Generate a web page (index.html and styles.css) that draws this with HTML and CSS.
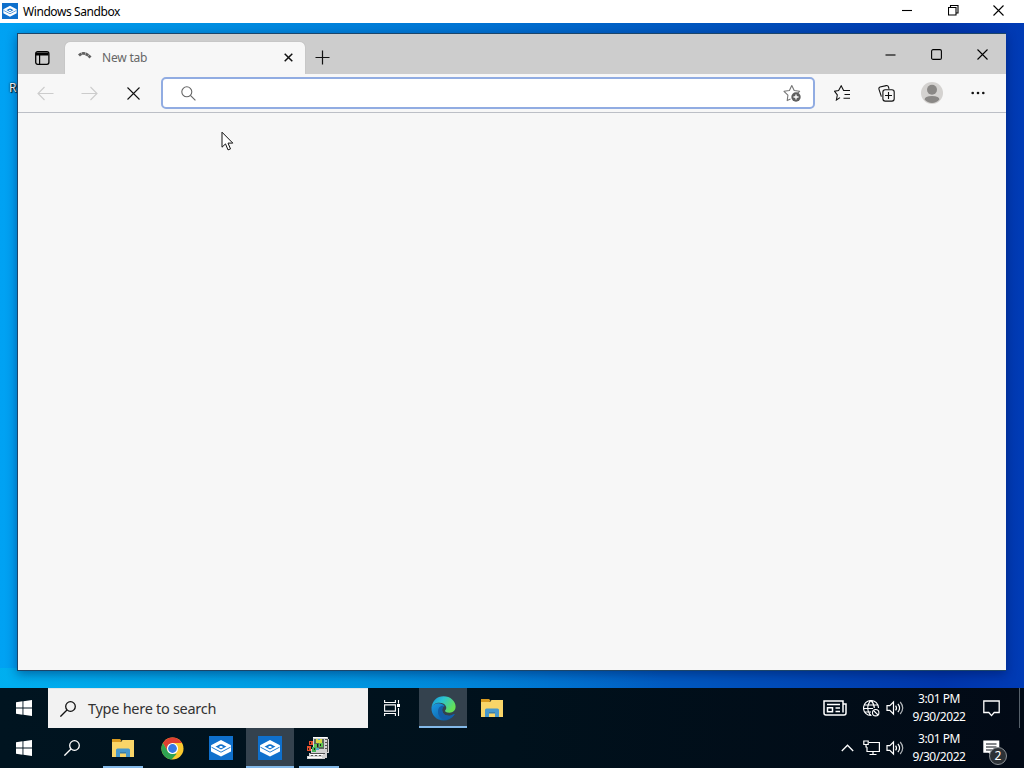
FILE: index.html
```html
<!DOCTYPE html>
<html lang="en">

<head>
    <meta charset="utf-8">
    <title>Windows Sandbox</title>
    <link rel="stylesheet" href="styles.css">
</head>

<body>
    <!-- shared icons -->
    <svg class="sprite" aria-hidden="true">
        <symbol id="sandbox" viewBox="0 0 24 24">
            <path fill="#0f70cc" d="M0 0h24v24H0z"/>
            <path fill="#fff" d="M12 4 22 9.300 12 14.600 2 9.300zM2 10.800l10 5.300 10-5.300v4.600l-10 5.200-10-5.200z"/>
            <path fill="#fff" d="M2 9.300h20v2L12 16.200 2 11.300z"/>
            <path fill="none" stroke="#0f70cc" stroke-width=".9" d="m2.500 11.200 9.500 5 9.500-5"/>
            <path fill="#0f70cc" d="M6.500 10.600c2-.6 3.500-2.400 5.500-2.400s3.500 1.800 5.500 2.400L12 13.600z"/>
            <path fill="#fff" d="M9.500 11c1-.3 1.500-1 2.500-1s1.500.7 2.500 1L12 12.300z"/>
        </symbol>
        <symbol id="start" viewBox="0 0 16 16">
            <path fill="#fff" d="M0 2.200 6.500 1.300v6.200H0zM7.400 1.200 16 0v7.500H7.400zM0 8.400h6.500v6.300L0 13.800zM7.400 8.400H16V16l-8.600-1.200z"/>
        </symbol>
        <symbol id="find" viewBox="0 0 16 16">
            <g fill="none" stroke="currentColor" stroke-width="1.300"><circle cx="10.500" cy="5.500" r="4.800"/><path d="M7 9 .4 15.600"/></g>
        </symbol>
        <symbol id="folder" viewBox="0 0 22 20">
            <path fill="#f9d568" d="M0 4h9l1.500-2H22v17H0z"/>
            <path fill="#d99b20" d="M0 1h8l1.500 1.500L8.500 4H0z"/>
            <path fill="#4798cc" d="M4 12q0-1.500 1.500-1.500h11Q18 10.500 18 12v7h-4v-4H8v4H4z"/>
            <path fill="#3a7ea9" d="M8 14h6v1.500H8z"/>
        </symbol>
        <symbol id="speaker" viewBox="0 0 18 16">
            <g fill="none" stroke="#fff" stroke-width="1.200"><path d="M1 5.600h2.800L7.500 2v12L3.800 10.400H1z"/><path d="M9.600 5.600q1.800 2.400 0 4.800M11.900 3.800q3.400 4.200 0 8.400"/><path d="M14.200 2q5 6 0 12" opacity=".7"/></g>
        </symbol>
    </svg>

    <header class="titlebar">
        <svg class="titlebar-logo"><use href="#sandbox"/></svg>
        <span class="titlebar-text">Windows Sandbox</span>
        <div class="titlebar-controls">
            <svg width="11" height="11" viewBox="0 0 11 11"><path d="M0 5.500h10"/></svg>
            <svg width="11" height="11" viewBox="0 0 11 11"><path d="M.5 2.500h7.500v7.500H.5zM2.500 2.500v-2h7.500v7.500H8"/></svg>
            <svg width="11" height="11" viewBox="0 0 11 11"><path d="m.5.5 10 10M10.500.5l-10 10"/></svg>
        </div>
    </header>

    <main class="desktop">
        <span class="desktop-label">R</span>
        <section class="browser">
            <div class="tabstrip">
                <div class="tab-actions">
                    <svg width="15" height="14" viewBox="0 0 15 14"><rect x=".7" y=".7" width="13.200" height="12.600" rx="2" fill="none" stroke="#000" stroke-width="1.300"/><path d="M1 1.500h12.500v3H1zM4 4h1.200v9H4z"/></svg>
                </div>
                <div class="tab">
                    <svg width="14" height="8" viewBox="0 0 14 8"><path d="M1 4.500Q6-.5 12.500 6.500" fill="none" stroke="#606060" stroke-width="2.800" stroke-dasharray="3.200 .4"/></svg>
                    <span class="tab-title">New tab</span>
                    <svg class="tab-close" width="9" height="9" viewBox="0 0 9 9"><path d="m.7.7 7.600 7.600M8.300.7.7 8.300" stroke="#111" stroke-width="1.500"/></svg>
                </div>
                <div class="new-tab">
                    <svg width="15" height="15" viewBox="0 0 15 15"><path d="M7.500.5v14M.5 7.500h14" stroke="#111" stroke-width="1.200"/></svg>
                </div>
                <div class="browser-controls">
                    <svg width="11" height="11" viewBox="0 0 11 11"><path d="M.5 6h10"/></svg>
                    <svg width="11" height="11" viewBox="0 0 11 11"><rect x=".6" y=".6" width="9.800" height="9.800" rx="1.500"/></svg>
                    <svg width="11" height="11" viewBox="0 0 11 11"><path d="m.5.5 10 10M10.500.5l-10 10"/></svg>
                </div>
            </div>

            <div class="toolbar">
                <div class="nav-btn disabled"><svg width="17" height="15" viewBox="0 0 17 15"><path d="M16.500 7.500H1M7.500 1 1 7.500 7.500 14"/></svg></div>
                <div class="nav-btn disabled"><svg width="17" height="15" viewBox="0 0 17 15"><path d="M.5 7.500H16M9.500 1 16 7.500 9.500 14"/></svg></div>
                <div class="nav-btn"><svg width="13" height="13" viewBox="0 0 13 13"><path d="m.5.5 12 12M12.500.5l-12 12"/></svg></div>
                <div class="address">
                    <svg width="15" height="15" viewBox="0 0 15 15"><g fill="none" stroke="#666" stroke-width="1.100"><circle cx="5.800" cy="5.800" r="5"/><path d="m9.400 9.400 5 5"/></g></svg>
                    <svg width="18" height="18" viewBox="0 0 18 18">
                        <path fill="none" stroke="#777" stroke-width="1.100" stroke-linejoin="round" d="M7.500 15 4.200 16.600l.7-5.400L1 7.300l5.400-.8L8.800 1.500l2.400 5 5.400.8-2.600 2.500"/>
                        <circle cx="13" cy="13" r="4.700" fill="#5f5f5f"/><path d="M10.500 13h5M13 10.500v5" stroke="#fff" stroke-width="1.300"/>
                    </svg>
                </div>
                <div class="tool-btn"><svg width="17" height="16" viewBox="0 0 17 16"><path d="M6 12.600 2.400 15l.9-5L.6 6.300l4-.8L7.200.8l2.400 4.700H16M10.500 9.500H16M9.500 13.300H16"/></svg></div>
                <div class="tool-btn"><svg width="17" height="17" viewBox="0 0 17 17"><path d="M3.400 11.600 1 4.300Q.5 2.500 2 2L8.200.6q1.800-.3 2.300 1.400l.5 1.800"/><rect x="4.900" y="4.800" width="11.300" height="11.300" rx="2.300"/><path d="M10.500 7v7M7 10.500h7"/></svg></div>
                <div class="tool-btn wide">
                    <svg class="avatar" width="22" height="22" viewBox="0 0 22 22"><circle cx="11" cy="11" r="11" fill="#d4d2d0"/><circle cx="11" cy="7.800" r="5" fill="#8a8886"/><path fill="#8a8886" d="M3.600 17.600q0-3.600 7.400-3.600t7.400 3.600Q15.600 21 11 21t-7.400-3.400z"/></svg>
                </div>
                <div class="tool-btn wide"><svg class="dots" width="14" height="4" viewBox="0 0 14 4"><circle cx="1.700" cy="2" r="1.300"/><circle cx="7" cy="2" r="1.300"/><circle cx="12.300" cy="2" r="1.300"/></svg></div>
            </div>
            <div class="page"></div>
        </section>
        <svg class="cursor" width="13" height="20" viewBox="0 0 13 20"><path fill="#fff" stroke="#111" d="M1 1.200v15l3.500-3.300 2.500 6 2.500-1-2.500-5.800h4.800z"/></svg>
    </main>

    <!-- guest taskbar -->
    <footer class="taskbar">
        <div class="task"><svg width="16" height="16"><use href="#start"/></svg></div>
        <div class="search-box"><svg width="16" height="16"><use href="#find"/></svg><span>Type here to search</span></div>
        <div class="task view">
            <svg width="17" height="16" viewBox="0 0 17 16"><path fill="none" stroke="#fff" stroke-width="1.100" d="M.6 0v2.500h10.800V0M.6 4.900h10.800v6.200H.6zM.6 16v-2.500h10.800V16M14.500 0v3.500M14.500 8v8"/><path fill="#fff" d="M13 4h3v3h-3z"/></svg>
        </div>
        <div class="task active">
            <svg width="25" height="25" viewBox="0 0 25 25">
                <defs>
                    <linearGradient id="edgeTop" x1="0" y1="0" x2="1" y2=".5"><stop offset="0" stop-color="#1690d5"/><stop offset=".45" stop-color="#2bc3d2"/><stop offset="1" stop-color="#65df55"/></linearGradient>
                    <linearGradient id="edgeLow" x1="0" y1="0" x2="1" y2="1"><stop offset="0" stop-color="#1b9be4"/><stop offset="1" stop-color="#0a5097"/></linearGradient>
                </defs>
                <path fill="url(#edgeLow)" d="M.5 11.500C2 7 10 5.500 13.600 10c-4.200 1-3.200 8.500 2.300 9.600 2.700.5 5-.3 6.800-1.400.7-.3 1 .2.700.6C21 22.500 17 24.600 12.700 24.600 5.500 24.600 0 19 .5 11.500z"/>
                <path fill="#155ea7" d="M7 16c0-5 3-7 6.500-6-3.500 2-2.800 8.500 2.400 9.600 2.700.5 5-.3 6.800-1.400.7-.3 1 .2.700.6-2.300 3.300-6 4.600-9.400 4.600-4 0-7-3.400-7-7.400z"/>
                <path fill="url(#edgeTop)" d="M.5 12C1 5 6 .3 12.500.3c7 0 12.100 5 12.100 10.200 0 4-2.700 6.200-6 6.200-3.400 0-5-1.300-4.500-2.300 3.200-3-.3-7.600-5.600-7.600-4 0-7 2-8 5.200z"/>
            </svg>
        </div>
        <div class="task"><svg width="22" height="20"><use href="#folder"/></svg></div>
        <div class="tray">
            <div class="tray-item news">
                <svg width="24" height="16" viewBox="0 0 24 16"><g fill="none" stroke="#fff" stroke-width="1.500"><path d="M20 12.500V1H1v12q0 2 2 2h18q2 0 2-2V4h-3"/><path d="M4 4.500h13M12.500 8H17M12.500 11.500H17"/><path d="M4.500 7.700h5v4h-5z"/></g></svg>
            </div>
            <div class="tray-item">
                <svg width="17" height="17" viewBox="0 0 17 17"><g fill="none" stroke="#fff" stroke-width="1.100"><path d="M8.500 15.500H8A7.500 7.500 0 1 1 15.500 8M8 15.500C3.700 11.500 3.700 4.500 8 .5c2.300 2.300 3.300 5 3.300 7.500M1.300 5h13.400M.5 8.500h9.500M1.300 12H8"/><circle cx="12.700" cy="12.700" r="3.200"/><path d="m10.500 10.500 4.500 4.500"/></g></svg>
            </div>
            <div class="tray-item"><svg width="18" height="16"><use href="#speaker"/></svg></div>
            <div class="clock"><span>3:01 PM</span><span class="date">9/30/2022</span></div>
            <div class="tray-item notice"><svg width="17" height="17" viewBox="0 0 17 17"><path fill="none" stroke="#fff" stroke-width="1.300" d="M.8 1h15.400v11.500h-5L8.500 15.600 5.800 12.500h-5z"/></svg></div>
            <div class="show-desktop"></div>
        </div>
    </footer>

    <!-- host taskbar -->
    <footer class="taskbar host">
        <div class="task"><svg width="16" height="16"><use href="#start"/></svg></div>
        <div class="task find"><svg width="16" height="16"><use href="#find"/></svg></div>
        <div class="task open"><svg width="22" height="20"><use href="#folder"/></svg></div>
        <div class="task">
            <svg width="23" height="23" viewBox="0 0 24 24">
                <circle cx="12" cy="12" r="11.500" fill="#fbc92f"/>
                <path fill="#df3f32" d="M2 6.300A11.500 11.500 0 0 1 22 6.300H12L7 14.800z"/>
                <path fill="#2fa352" d="M2 6.300 7.200 15 12 17.500h4.500L11 23.500A11.500 11.500 0 0 1 2 6.300z"/>
                <circle cx="12" cy="12" r="5.800" fill="#fff"/><circle cx="12" cy="12" r="4.600" fill="#3579e5"/>
            </svg>
        </div>
        <div class="task"><svg width="24" height="24"><use href="#sandbox"/></svg></div>
        <div class="task active"><svg width="24" height="24"><use href="#sandbox"/></svg></div>
        <div class="task open legacy">
            <svg width="24" height="24" viewBox="0 0 24 24" shape-rendering="crispEdges">
                <path fill="#d2d2d2" d="M7 1h15v2h1v14h-2v5h-2v1H1v-3h2v-3h2v-4h2z"/>
                <path fill="#fff" d="M7 1h14v1H7zM4 18h13v1H4zM2 21h14v1H2z"/>
                <path fill="#555" d="M19 3h2v1h-2zM19 6h2v1h-2zM19 9h2v1h-2zM19 12h2v1h-2zM5 19h2v1H5zM9 19h2v1H9zM13 19h2v1h-2zM4 17h15v1H4zM21 3h1v13h-1z"/>
                <path fill="#5b6a5c" d="M8 3h10v10H8z"/>
                <path fill="#d7d942" d="M10 3h6v4h-6z"/>
                <path fill="#5fc552" d="M8 8h3v4H8zM13 7h4v4h-4z"/>
                <path fill="#e5512f" d="M3 5h4v4H3zM1 10h4v5H1z"/>
                <path fill="#45b558" d="M6 11h4v5H6z"/>
                <path fill="#231c18" d="M4 6h1v2H4zM2 12h1v2H2zM8 12h1v2H8zM11 8h1v3h-1zM14 8h1v2h-1z"/>
                <path fill="#4dacd0" d="M12 3h2v1h-2zM10 12h3v2h-3z"/>
            </svg>
        </div>
        <div class="tray">
            <div class="tray-item"><svg width="13" height="8" viewBox="0 0 13 8"><path fill="none" stroke="#fff" stroke-width="1.300" d="m.8 7 5.700-5.800L12.200 7"/></svg></div>
            <div class="tray-item">
                <svg width="17" height="16" viewBox="0 0 17 16"><g fill="none" stroke="#fff" stroke-width="1.200"><path d="M6 2.500h10.400v9H4V7M10 11.500v3M6.500 14.500h7"/><path d="M.8 1h4.400v3.500H.8zM3 4.500v2.500h1"/></g></svg>
            </div>
            <div class="tray-item"><svg width="18" height="16"><use href="#speaker"/></svg></div>
            <div class="clock"><span>3:01 PM</span><span class="date">9/30/2022</span></div>
            <div class="tray-item notice">
                <svg width="17" height="17" viewBox="0 0 17 17"><path fill="#fff" d="M.3.5h16v12.300h-5L8.500 16l-3-3.200H.3z"/><path stroke="#0a1018" stroke-width="1.200" d="M3 4h10.500M3 7h10.500M3 10h7"/></svg>
                <span class="badge">2</span>
            </div>
            <div class="show-desktop"></div>
        </div>
    </footer>
</body>

</html>
```
FILE: styles.css
```css
* {
    box-sizing: border-box;
}

body {
    margin: 0;
    height: 768px;
    display: flex;
    flex-direction: column;
    overflow: hidden;
    font-family: "Noto Sans", "Open Sans", sans-serif;
    font-size: 12px;
}

svg {
    display: block;
    flex: none;
}

.sprite {
    position: absolute;
    width: 0;
    height: 0;
}

/* sandbox window */
.titlebar {
    display: flex;
    align-items: center;
    height: 23px;
    padding: 0 2px;
    background: #fff;
}

.titlebar-logo {
    width: 16px;
    height: 16px;
    margin-top: -1px;
}

.titlebar-text {
    margin-left: 5px;
    font-size: 12px;
    letter-spacing: -0.42px;
}

.titlebar-controls,
.browser-controls {
    display: flex;
    margin-left: auto;
    fill: none;
    stroke: #000;
    stroke-width: 1.1px;
}

.titlebar-controls {
    gap: 34.5px;
    margin-right: 18px;
    margin-top: -2px;
}

.desktop {
    position: relative;
    height: 665px;
    padding: 10px 18px 17px 17px;
    background:
        linear-gradient(90deg, rgba(0, 190, 235, 0.45), rgba(0, 190, 235, 0.35) 35%, rgba(0, 190, 235, 0) 65%) bottom / 100% 20px no-repeat,
        linear-gradient(90deg, #00a2f3 0%, #0092e4 18%, #0074d4 46%, #004fba 73%, #0036ac 92%, #003bb5 100%);
}

.desktop-label {
    position: absolute;
    left: 9px;
    top: 57px;
    color: #fff;
    font-size: 12px;
    line-height: 16px;
    text-shadow: 1px 1px 1px #000, 0 0 2px #000;
}

/* browser */
.browser {
    position: relative;
    display: flex;
    flex-direction: column;
    height: 638px;
    border: 1px solid #1c4569;
    border-right-width: 0;
    background: #f7f7f7;
    box-shadow: 0 3px 10px rgba(0, 15, 70, 0.45);
}

.tabstrip {
    display: flex;
    height: 40px;
    background: #cdcdcd;
}

.tab-actions {
    display: flex;
    align-items: center;
    justify-content: center;
    width: 47px;
    padding: 7px 0 0 2px;
}

.tab {
    display: flex;
    align-items: center;
    width: 240px;
    margin-top: 8px;
    padding: 0 12px 1px 13px;
    border-radius: 5px 5px 0 0;
    background: #f7f7f7;
    box-shadow: 0 0 1px #999;
}

.tab > svg:first-child {
    margin-top: -6px;
}

.tab-title {
    margin: -1px 0 0 10px;
    color: #666;
    font-size: 12px;
    letter-spacing: -0.2px;
}

.tab-close {
    margin-left: auto;
}

.new-tab {
    padding: 16px 10px;
}

.browser-controls {
    gap: 35px;
    margin-right: 18px;
    padding-top: 15px;
}

.toolbar {
    position: relative;
    display: flex;
    align-items: center;
    height: 39px;
    padding-left: 5px;
    border-bottom: 1px solid #bcbfc6;
    background: #f7f7f7;
}

.nav-btn,
.tool-btn {
    display: flex;
    align-items: center;
    justify-content: center;
    width: 44px;
    fill: none;
    stroke: #111;
    stroke-width: 1.1px;
}

.disabled {
    stroke: #ccc;
}

.wide {
    width: 46px;
    padding-left: 2px;
}

.wide .avatar {
    stroke: none;
}

.wide .dots {
    fill: #111;
    stroke: none;
}

.address {
    display: flex;
    align-items: center;
    justify-content: space-between;
    width: 654px;
    height: 32px;
    margin: 0 5px 0 6px;
    padding: 0 12px 0 18px;
    border: 2px solid #91ace2;
    border-radius: 5px;
    background: #fff;
}

.page {
    flex: 1;
}

.cursor {
    position: absolute;
    left: 221px;
    top: 108px;
}

/* taskbars */
.taskbar {
    display: flex;
    height: 40px;
    background: linear-gradient(90deg, #001420, #00111c 50%, #020a16);
    color: #fff;
}

.task {
    display: flex;
    align-items: center;
    justify-content: center;
    width: 48px;
    margin-right: 1px;
}

.task:first-child {
    margin-right: 0;
}

.view {
    margin-right: 3px;
}

.find {
    margin-right: 3px;
}

.active {
    background: linear-gradient(#34424e, #34424e) top / 100% 38px no-repeat, #83b9e9;
}

.open {
    background: linear-gradient(#83b9e9, #83b9e9) bottom / 40px 2px no-repeat;
}

.legacy {
    padding-right: 2px;
}

.search-box {
    display: flex;
    align-items: center;
    width: 320px;
    padding: 0 12px;
    border: 1px solid #dfe4e6;
    border-width: 1px 0 0;
    background: #f2f2f2;
    color: #111;
}

.search-box span {
    margin: -2px 0 0 12px;
    color: #333;
    font-size: 14.5px;
    letter-spacing: -0.28px;
}

.tray {
    display: flex;
    align-items: center;
    margin-left: auto;
}

.tray-item {
    position: relative;
    display: flex;
    align-items: center;
    justify-content: center;
    width: 24px;
}

.news {
    margin-right: 12px;
}

.clock {
    display: flex;
    flex-direction: column;
    align-items: center;
    width: 64px;
    font-size: 12px;
    line-height: 18px;
    letter-spacing: -0.45px;
}

.notice {
    width: 40px;
}

.badge {
    position: absolute;
    left: 18px;
    top: 7px;
    width: 18px;
    height: 18px;
    border: 1px solid #8b9095;
    border-radius: 50%;
    background: #2c3136;
    font-size: 12px;
    line-height: 15px;
    text-align: center;
}

.show-desktop {
    width: 5px;
    height: 40px;
    margin-left: 8px;
    border-left: 1px solid #56606a;
}

.host .show-desktop {
    border-color: transparent;
}
```
